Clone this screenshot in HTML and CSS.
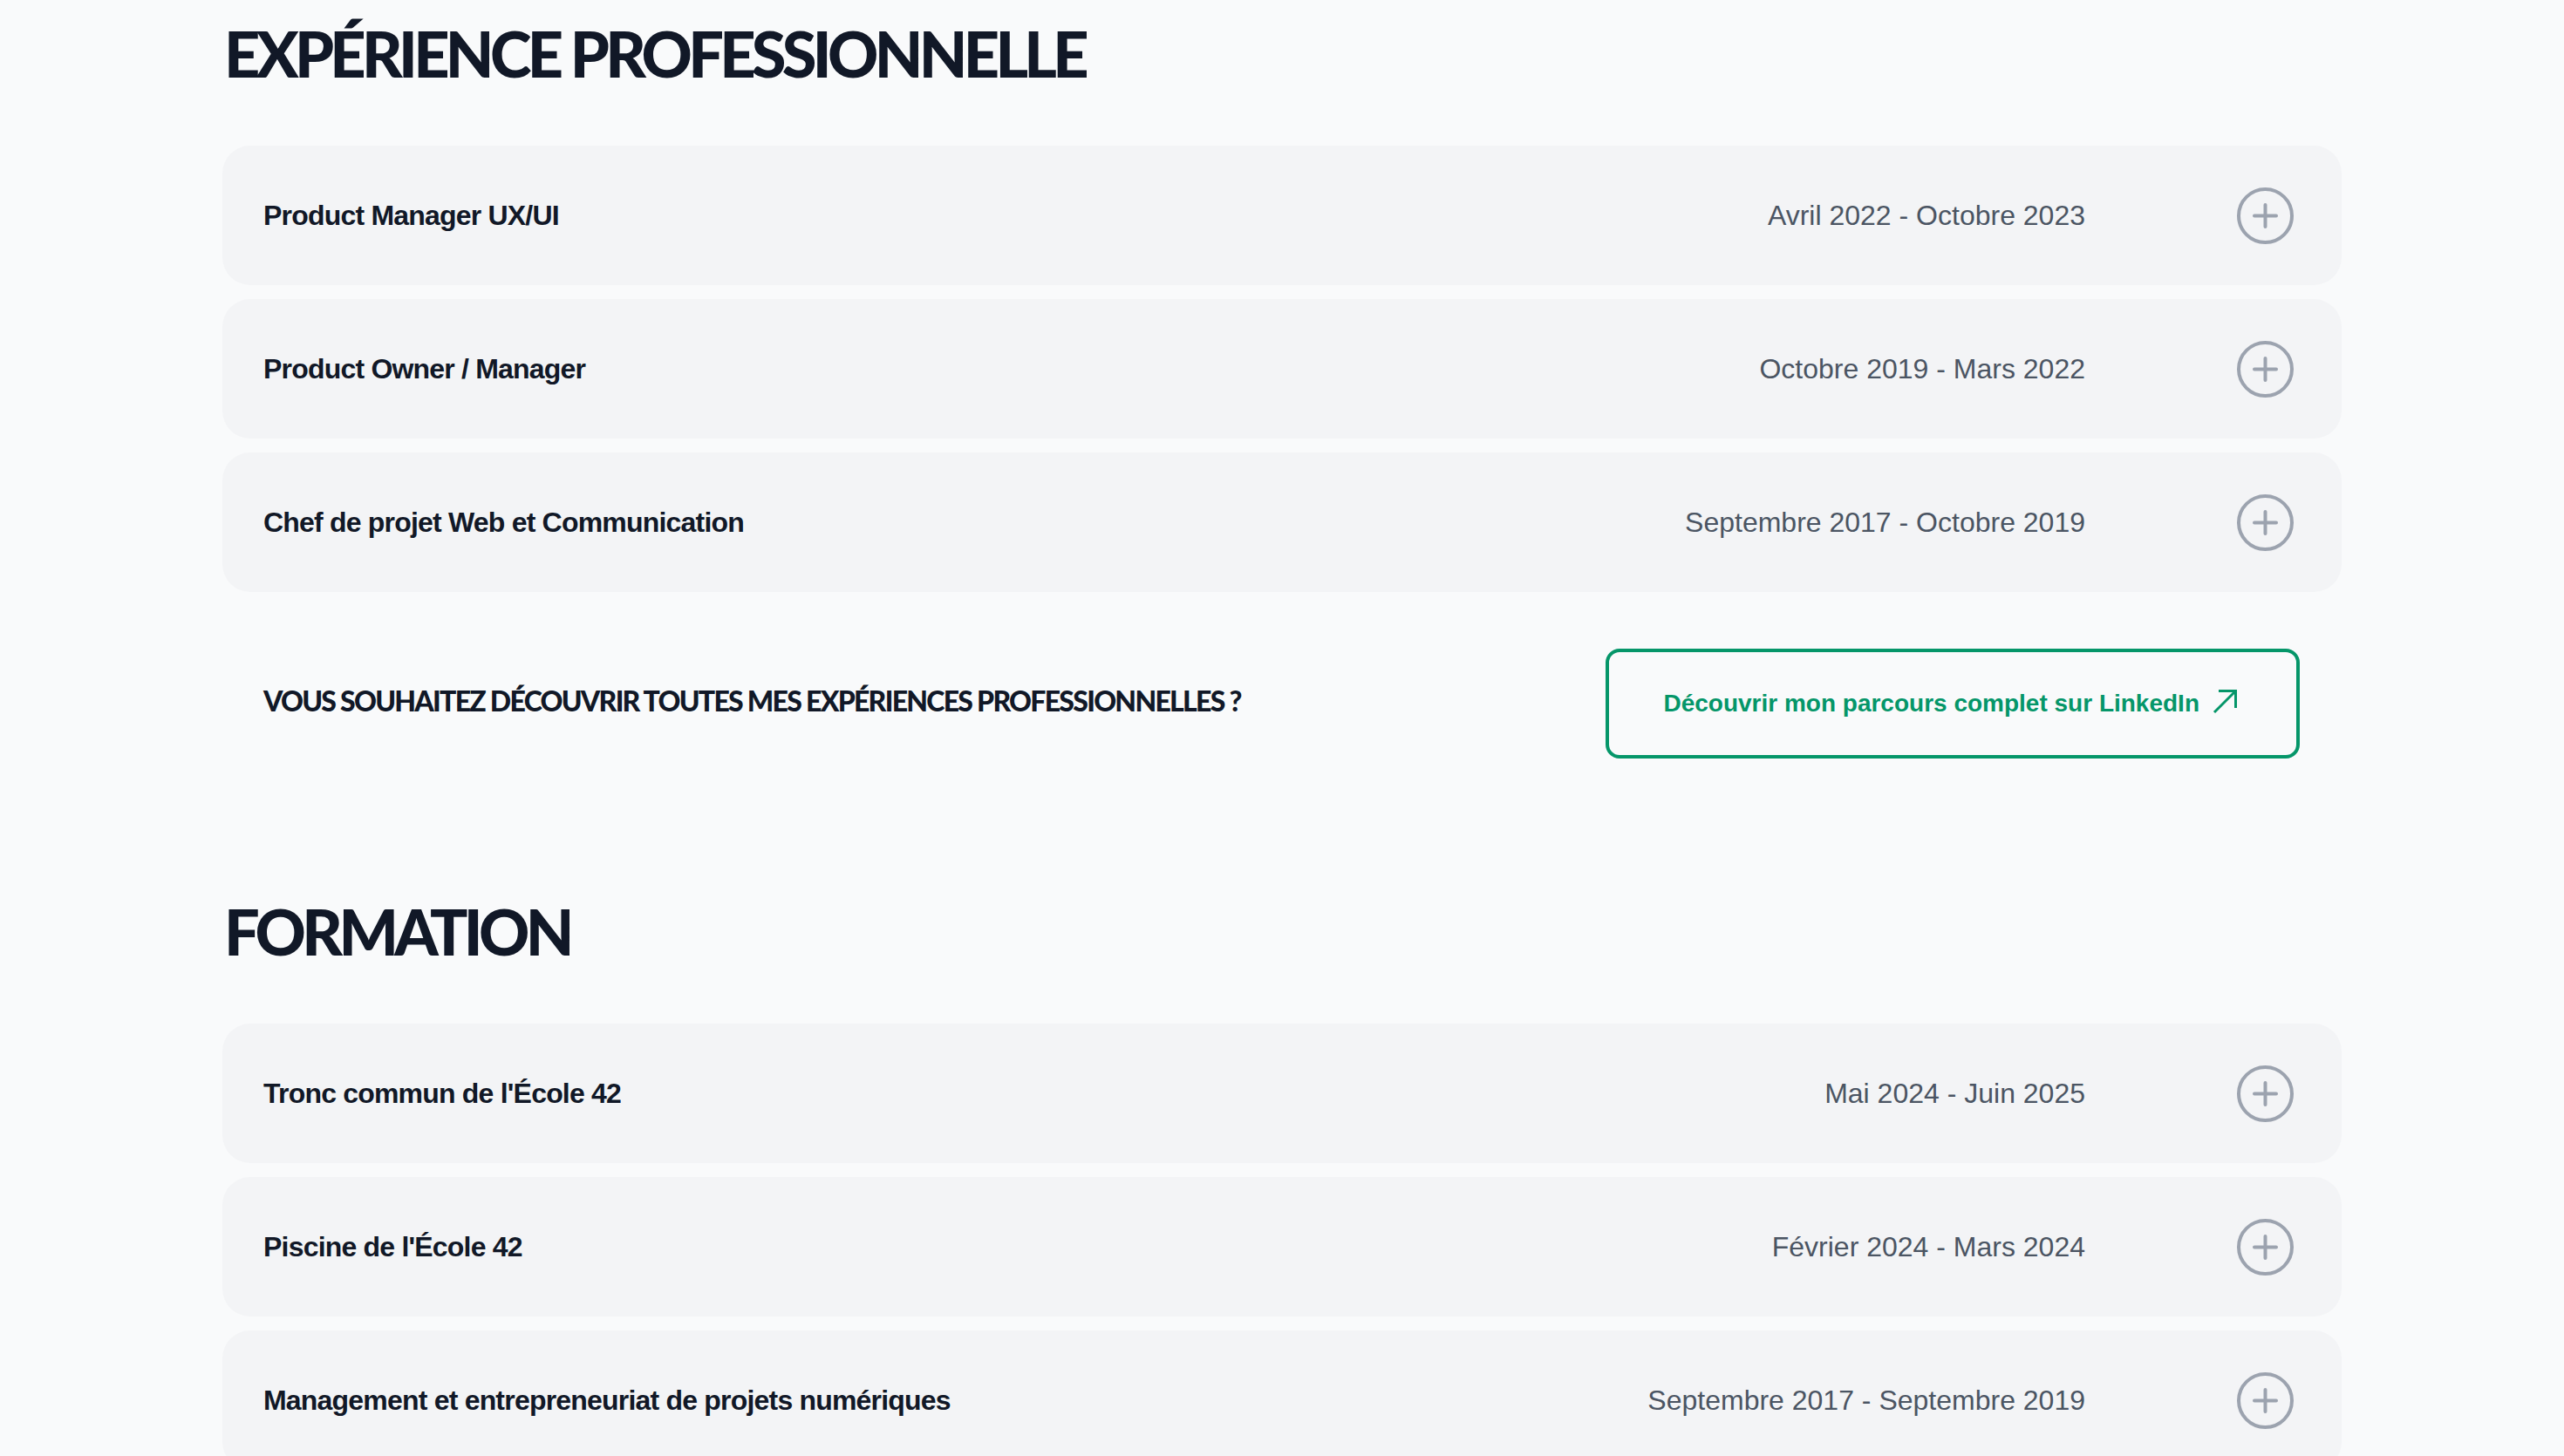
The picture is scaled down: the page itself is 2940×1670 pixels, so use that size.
FILE: index.html
```html
<!DOCTYPE html>
<html lang="fr">
<head>
<meta charset="utf-8">
<title>Parcours</title>
<link rel="stylesheet" href="styles.css">
</head>
<body>
<main class="page">
  <section class="section">
    <h2 class="section-title">EXPÉRIENCE PROFESSIONNELLE</h2>
    <div class="list">
      <div class="item">
        <span class="item-title">Product Manager UX/UI</span>
        <span class="item-date">Avril 2022 - Octobre 2023</span>
        <span class="toggle"><svg viewBox="0 0 65 65" width="65" height="65"><circle cx="32.5" cy="32.5" r="30.5" fill="none" stroke="#9ca3af" stroke-width="4"/><path d="M20 32.5h25M32.5 20v25" stroke="#9ca3af" stroke-width="4" stroke-linecap="round"/></svg></span>
      </div>
      <div class="item">
        <span class="item-title">Product Owner / Manager</span>
        <span class="item-date">Octobre 2019 - Mars 2022</span>
        <span class="toggle"><svg viewBox="0 0 65 65" width="65" height="65"><circle cx="32.5" cy="32.5" r="30.5" fill="none" stroke="#9ca3af" stroke-width="4"/><path d="M20 32.5h25M32.5 20v25" stroke="#9ca3af" stroke-width="4" stroke-linecap="round"/></svg></span>
      </div>
      <div class="item">
        <span class="item-title">Chef de projet Web et Communication</span>
        <span class="item-date">Septembre 2017 - Octobre 2019</span>
        <span class="toggle"><svg viewBox="0 0 65 65" width="65" height="65"><circle cx="32.5" cy="32.5" r="30.5" fill="none" stroke="#9ca3af" stroke-width="4"/><path d="M20 32.5h25M32.5 20v25" stroke="#9ca3af" stroke-width="4" stroke-linecap="round"/></svg></span>
      </div>
    </div>
    <div class="cta">
      <p class="cta-text">VOUS SOUHAITEZ DÉCOUVRIR TOUTES MES EXPÉRIENCES PROFESSIONNELLES ?</p>
      <a class="cta-button" href="#">Découvrir mon parcours complet sur LinkedIn
        <svg class="arrow" viewBox="0 0 28 28" width="28" height="28"><path d="M2 26L26.5 1.5M7 1.5h19.5V21" fill="none" stroke="#059669" stroke-width="3"/></svg>
      </a>
    </div>
  </section>

  <section class="section section-next">
    <h2 class="section-title">FORMATION</h2>
    <div class="list">
      <div class="item">
        <span class="item-title">Tronc commun de l'École 42</span>
        <span class="item-date">Mai 2024 - Juin 2025</span>
        <span class="toggle"><svg viewBox="0 0 65 65" width="65" height="65"><circle cx="32.5" cy="32.5" r="30.5" fill="none" stroke="#9ca3af" stroke-width="4"/><path d="M20 32.5h25M32.5 20v25" stroke="#9ca3af" stroke-width="4" stroke-linecap="round"/></svg></span>
      </div>
      <div class="item">
        <span class="item-title">Piscine de l'École 42</span>
        <span class="item-date">Février 2024 - Mars 2024</span>
        <span class="toggle"><svg viewBox="0 0 65 65" width="65" height="65"><circle cx="32.5" cy="32.5" r="30.5" fill="none" stroke="#9ca3af" stroke-width="4"/><path d="M20 32.5h25M32.5 20v25" stroke="#9ca3af" stroke-width="4" stroke-linecap="round"/></svg></span>
      </div>
      <div class="item">
        <span class="item-title">Management et entrepreneuriat de projets numériques</span>
        <span class="item-date">Septembre 2017 - Septembre 2019</span>
        <span class="toggle"><svg viewBox="0 0 65 65" width="65" height="65"><circle cx="32.5" cy="32.5" r="30.5" fill="none" stroke="#9ca3af" stroke-width="4"/><path d="M20 32.5h25M32.5 20v25" stroke="#9ca3af" stroke-width="4" stroke-linecap="round"/></svg></span>
      </div>
    </div>
  </section>
</main>
</body>
</html>
```

FILE: styles.css
```css
html, body {
  margin: 0;
  padding: 0;
  background: #f9fafb;
}

body {
  font-family: "Liberation Sans", Arial, sans-serif;
  color: #111827;
}

.page {
  width: 2430px;
  margin: 0 auto;
  padding-top: 21px;
}

.section-title {
  margin: 0 0 66px 2px;
  font-family: Lato, "DejaVu Sans", sans-serif;
  font-weight: 900;
  font-size: 72px;
  line-height: 80px;
  letter-spacing: -0.065em;
  color: #111827;
}

.list {
  display: flex;
  flex-direction: column;
  gap: 16px;
}

.item {
  display: flex;
  align-items: center;
  height: 160px;
  padding: 0 55px 0 47px;
  background: #f3f4f6;
  border-radius: 32px;
}

.item-title {
  flex: 1;
  font-size: 32px;
  font-weight: 700;
  letter-spacing: -0.8px;
  color: #111827;
}

.item-date {
  font-size: 32px;
  color: #4b5563;
}

.toggle {
  display: flex;
  margin-left: 174px;
  width: 65px;
  height: 65px;
}

.cta {
  display: flex;
  align-items: center;
  justify-content: space-between;
  margin-top: 65px;
  padding: 0 48px 0 47px;
}

.cta-text {
  margin: 0 0 7px 0;
  font-family: Lato, "DejaVu Sans", sans-serif;
  font-weight: 900;
  font-size: 32px;
  letter-spacing: -0.054em;
  color: #111827;
}

.cta-button {
  display: flex;
  align-items: center;
  gap: 15px;
  height: 126px;
  box-sizing: border-box;
  padding: 0 68px 0 62px;
  border: 4px solid #059669;
  border-radius: 16px;
  font-size: 28px;
  font-weight: 700;
  letter-spacing: 0;
  color: #059669;
  text-decoration: none;
}

.arrow {
  margin-top: -4px;
}

.section-next {
  margin-top: 158px;
}
```
